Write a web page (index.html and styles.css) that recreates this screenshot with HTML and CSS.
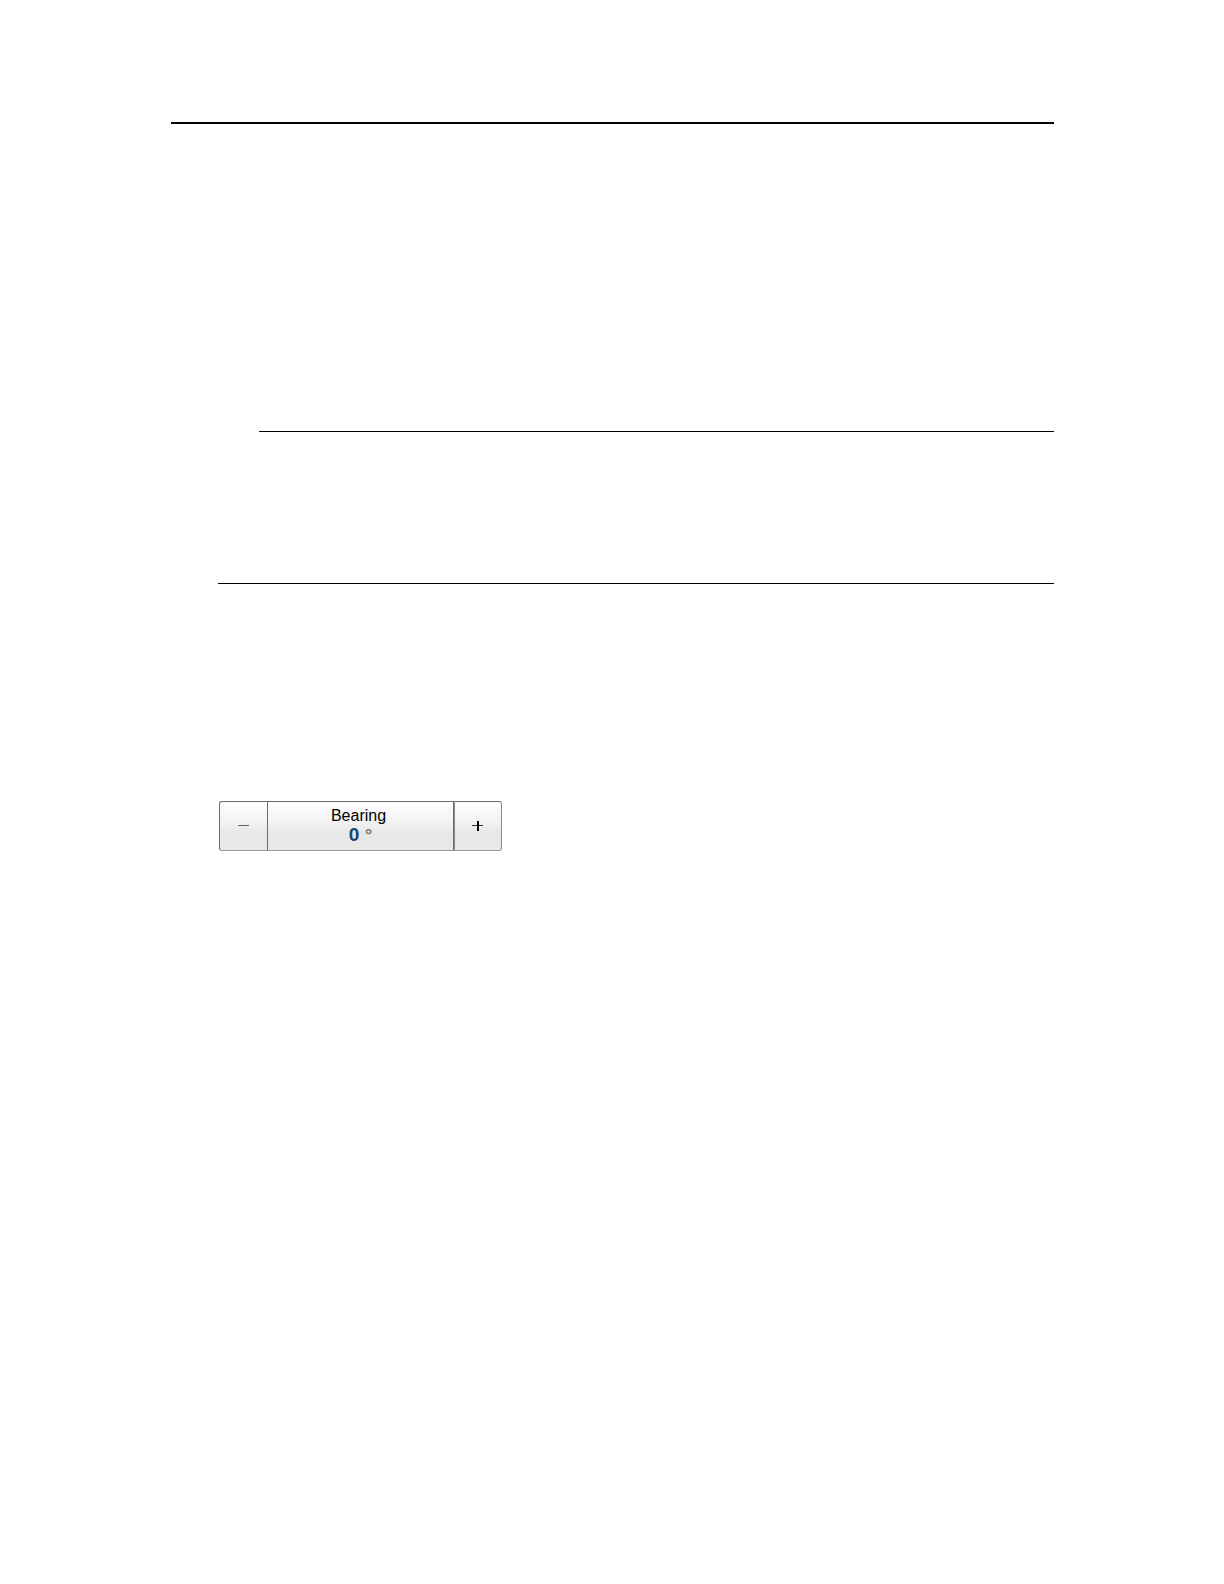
FILE: index.html
```html
<!DOCTYPE html>
<html lang="en">
<head>
  <meta charset="UTF-8">
  <meta name="viewport" content="width=device-width, initial-scale=1.0">
  <title>Bearing</title>
  <link rel="stylesheet" href="styles.css">
</head>
<body>
  <main class="page">
    <hr class="rule rule-header">
    <hr class="rule rule-step">
    <hr class="rule rule-section">

    <div class="spinner">
      <button type="button" class="minus" aria-label="Decrease bearing">
        <svg width="11" height="11" viewBox="0 0 11 11">
          <path d="M0 4h11v1H0z" />
        </svg>
      </button>
      <button type="button" class="spinner-value">
        <span class="label">Bearing</span>
        <span class="value">0 <span class="unit">°</span></span>
      </button>
      <button type="button" class="plus" aria-label="Increase bearing">
        <svg width="12" height="12" viewBox="0 0 12 12">
          <path class="bar" d="M0 5h11v1H0z" />
          <path d="M5 1h2v10H5z" />
        </svg>
      </button>
    </div>
  </main>
</body>
</html>
```

FILE: styles.css
```css
body {
  margin: 0;
  background-color: #fff;
  font-family: "Liberation Sans", Arial, sans-serif;
}
.page {
  display: flex;
  flex-direction: column;
  padding: 122px 170px 0 171px;
}

/* Rules */
.rule {
  align-self: stretch;
  height: 1px;
  margin: 0;
  border: none;
  background-color: #000;
}
.rule-header {
  height: 2px;
}
.rule-step {
  margin: 307px 0 0 88px;
}
.rule-section {
  margin: 151px 0 0 47px;
}

/* Bearing spinner */
.spinner {
  display: grid;
  grid-template-columns: 48px 187px 48px;
  align-self: flex-start;
  height: 50px;
  box-sizing: border-box;
  margin: 217px 0 0 48px;
}
.spinner button {
  display: flex;
  align-items: center;
  justify-content: center;
  box-sizing: border-box;
  margin: 0;
  padding: 0;
  border: 1px solid #6b6b6b;
  border-bottom-color: #9a9a9a;
  background: linear-gradient(#fdfdfd, #f3f3f3 40%, #e7e7e7 65%, #e8e8e8);
  font-family: inherit;
  cursor: pointer;
}
.spinner .minus {
  border-right: none;
  border-radius: 3px 0 0 3px;
  fill: #666;
}
.spinner .plus {
  border-left-color: #8a8a8a;
  border-right-color: #8a8a8a;
  border-radius: 0 3px 3px 0;
  fill: #000;
}
.plus .bar {
  fill: #333;
}
.spinner .spinner-value {
  flex-direction: column;
  padding: 0 4px 2px 0;
}
.label {
  color: #000;
  font-size: 16px;
  line-height: 19px;
}
.value {
  padding-left: 4px;
  color: #1a4377;
  font-size: 19px;
  font-weight: bold;
  line-height: 19px;
}
.unit {
  color: #777;
}
```
